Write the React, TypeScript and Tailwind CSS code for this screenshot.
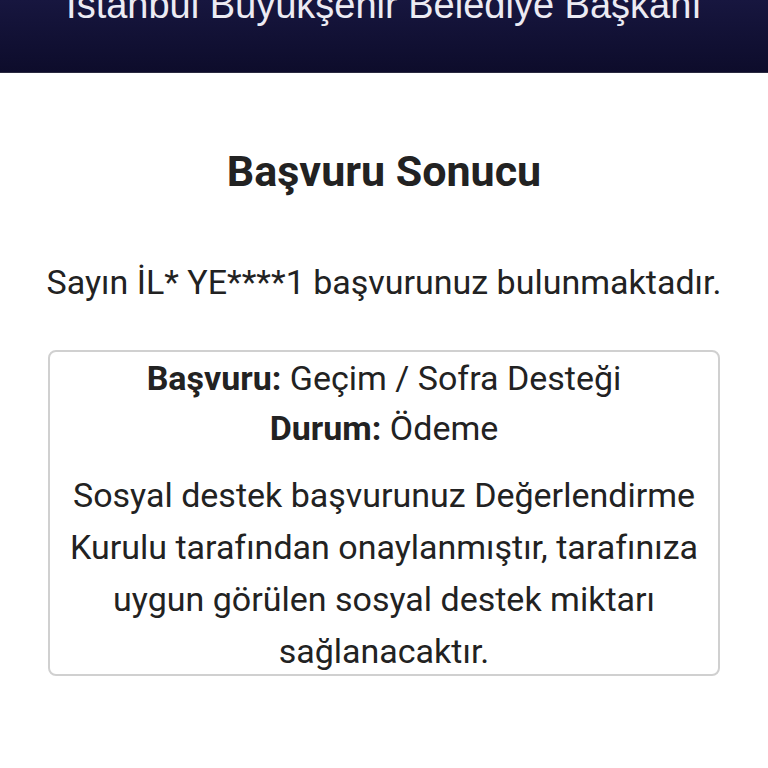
export default function App() {
  return (
    <div className="min-h-[768px] bg-white" style={{ fontFamily: "Roboto, 'Noto Sans', sans-serif" }}>
      <header className="h-[73px] overflow-hidden bg-gradient-to-b from-[#17163f] to-[#0d0c2b] border-b border-[#2a2a40]">
        <div
          className="mt-[-16px] text-center text-[38px] leading-[42px] text-[#ecebf3] whitespace-nowrap"
          style={{ fontFamily: "'Liberation Sans', Arial, sans-serif" }}
        >
          İstanbul Büyükşehir Belediye Başkanı
        </div>
      </header>

      <main className="px-[48px] text-[#222222]">
        <h1 className="mt-[73px] text-center text-[43px] font-bold leading-[50px]">Başvuru Sonucu</h1>
        <p className="mt-[66px] -mx-[20px] text-center text-[34px] leading-[40px] whitespace-nowrap">
          Sayın İL* YE****1 başvurunuz bulunmaktadır.
        </p>
        <div className="mt-[48px] rounded-[8px] border-2 border-[#d0d0d0] px-[12px] pt-[1px] text-center text-[34px]">
          <div className="leading-[50px]">
            <span className="font-bold">Başvuru:</span> Geçim / Sofra Desteği
          </div>
          <div className="leading-[50px]">
            <span className="font-bold">Durum:</span> Ödeme
          </div>
          <p className="mt-[16px] mb-[-3px] leading-[52px]">
            Sosyal destek başvurunuz Değerlendirme Kurulu tarafından onaylanmıştır, tarafınıza uygun görülen sosyal
            destek miktarı sağlanacaktır.
          </p>
        </div>
      </main>
    </div>
  );
}
